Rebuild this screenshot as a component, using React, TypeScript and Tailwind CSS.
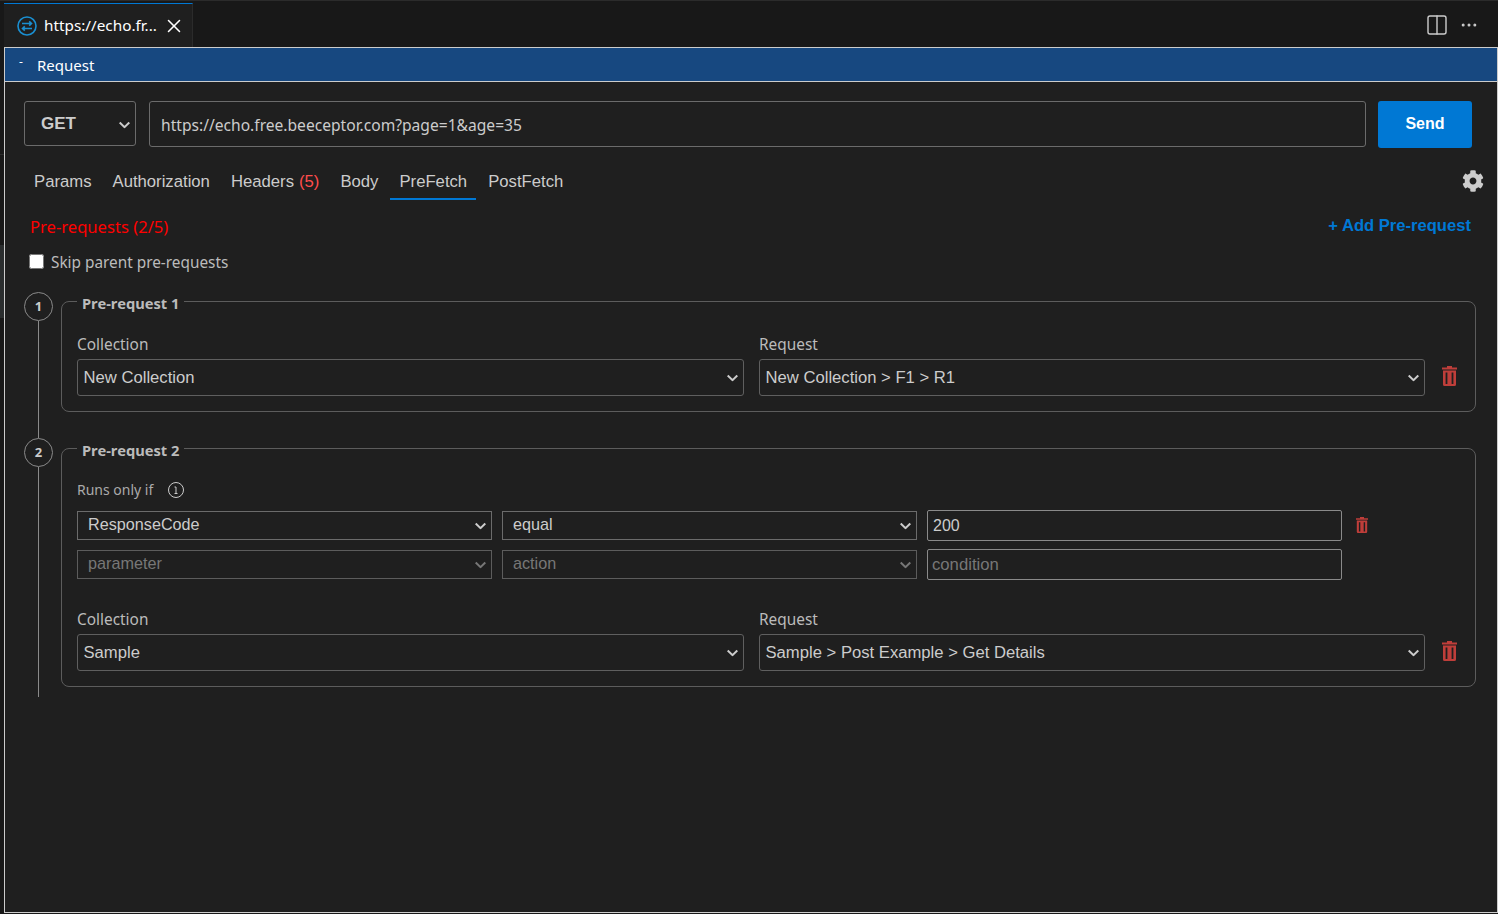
import { ReactNode } from 'react';
import { X, Columns2, Ellipsis } from 'lucide-react';
import { FaCog } from 'react-icons/fa';

const ui = 'font-["Noto_Sans",sans-serif]';
const arial = 'font-["Liberation_Sans",Arial,sans-serif]';

function TrashIcon({ className }: { className: string }) {
  return (
    <svg viewBox="0 0 15 20" fill="#bf3e3a" fillRule="evenodd" className={`shrink-0 ${className}`}>
      <path d="M5 0h5v1.5h5v2H0v-2h5z" />
      <path d="M1 4.5h13V18.5a1.5 1.5 0 0 1-1.5 1.5h-10A1.5 1.5 0 0 1 1 18.5zM3.6 6.5v11.5h1.8V6.5zM9.6 6.5v11.5h1.8V6.5z" />
    </svg>
  );
}

function FieldSelect({ value, className, selectClassName }: { value: string; className: string; selectClassName: string }) {
  return (
    <div className={`relative ${className}`}>
      <select
        defaultValue={value}
        className={`block w-full h-full appearance-none bg-[#1f1f1f] border ${selectClassName}`}
      >
        <option>{value}</option>
      </select>
      <svg
        width="11"
        height="7"
        viewBox="0 0 11 7"
        fill="none"
        stroke="currentColor"
        strokeWidth="2"
        className={`absolute right-[6px] top-1/2 -translate-y-1/2 mt-[1px] pointer-events-none ${value === 'parameter' || value === 'action' ? 'text-[#777777]' : 'text-[#cccccc]'}`}
      >
        <path d="M0.7 1l4.8 4.6L10.3 1" />
      </svg>
    </div>
  );
}

function CollectionRow({ collection, request }: { collection: string; request: string }) {
  const big = `rounded-[3px] border-[#5f5f5f] pl-[5.5px] pt-[2px] text-[16.65px] text-[#cccccc] ${arial}`;
  return (
    <div className="flex items-end">
      <label className="block w-[667px] mr-[15px]">
        <span className={`block text-[15.4px] leading-[20px] mb-[4px] text-[#bbbbbb] ${ui}`}>Collection</span>
        <FieldSelect value={collection} className="h-[37px]" selectClassName={big} />
      </label>
      <label className="block w-[666px]">
        <span className={`block text-[15.4px] leading-[20px] mb-[4px] text-[#bbbbbb] ${ui}`}>Request</span>
        <FieldSelect value={request} className="h-[37px]" selectClassName={big} />
      </label>
      <TrashIcon className="ml-[17px] mb-[10px] w-[15px] h-[20px]" />
    </div>
  );
}

function Step({ n, title, className, children }: { n: number; title: string; className: string; children: ReactNode }) {
  return (
    <div className="flex">
      <div className="flex flex-col items-center w-[29px] mr-[8px] shrink-0">
        <div className={`w-[29px] h-[29px] pt-[1px] rounded-full border border-[#8a8a8a] flex items-center justify-center text-[13px] font-bold text-[#cccccc] ${ui}`}>
          {n}
        </div>
        <div className="flex-1 w-px bg-[#8a8a8a]" />
      </div>
      <fieldset className={`flex-1 self-start border border-[#5c5c5c] rounded-[8px] px-[15px] pb-[15px] ${className}`}>
        <legend className={`px-[5px] pt-[4px] text-[14.7px] leading-[15px] font-bold text-[#bbbbbb] ${ui}`}>{title}</legend>
        {children}
      </fieldset>
    </div>
  );
}

export default function App() {
  const cond = `border-[#6b6b6b] pl-[10px] pb-[2px] text-[16.2px] text-[#cccccc] ${arial}`;
  const condEmpty = `border-[#5c5c5c] pl-[10px] pb-[2px] text-[16.2px] text-[#777777] ${arial}`;
  const tab = 'h-[36px] px-[9px] pb-[1px] flex items-center';

  return (
    <div className="w-[1498px] h-[914px] overflow-hidden bg-[#181818] flex flex-col">
      {/* Tab strip */}
      <div className="h-[47px] shrink-0 flex items-stretch pl-[4px] pt-[2px] border-t border-[#2b2b2b]">
        <div className="w-[189px] bg-[#1f1f1f] border-t border-[#0078d4] border-r border-r-[#2b2b2b] flex items-center pl-[13px]">
          <svg width="20" height="20" viewBox="0 0 20 20" fill="none" stroke="#1a8fd1" strokeWidth="1.6" className="shrink-0">
            <circle cx="10" cy="10" r="9" />
            <path d="M5 7.5h9.5M12.2 5.3l2.3 2.2-2.3 2.2" />
            <path d="M15 12.5H5.5M7.8 10.3l-2.3 2.2 2.3 2.2" />
          </svg>
          <span className={`ml-[7px] text-[15.3px] text-white ${ui}`}>https://echo.fr...</span>
          <X className="ml-[6px] text-white" size={22} strokeWidth={1.7} />
        </div>
        <div className="flex-1 flex items-center justify-end gap-[10px] pr-[19px]">
          <Columns2 className="text-[#cccccc]" size={24} strokeWidth={1.4} />
          <Ellipsis className="text-[#cccccc]" size={20} strokeWidth={1.6} />
        </div>
      </div>

      <div className="flex-1 flex mb-[1px]">
        {/* Left rail */}
        <div className="w-[4px] shrink-0">
          <div className="h-[108px] border-b border-[#2b2b2b]" />
          <div className="h-[90px]" />
          <div className="h-[73px] bg-[#2a2d2e]" />
        </div>

        {/* Request panel */}
        <div className="flex-1 bg-[#1f1f1f] border border-[#cccccc] border-t-0">
          <div className={`h-[35px] pt-[1px] bg-[#174880] border-y border-[#cccccc] flex items-center pl-[14px] text-[15px] text-white ${ui}`}>
            <span className="w-[18px] -mt-[6px] text-[12px]">-</span>
            Request
          </div>

          <div className="pl-[19px] pr-[25px] pt-[19px] flex items-start">
            <FieldSelect
              value="GET"
              className="w-[112px] h-[45px]"
              selectClassName={`rounded-[3px] border-[#6b6b6b] pl-[16px] text-[17px] font-bold text-[#cccccc] ${arial}`}
            />
            <input
              readOnly
              value="https://echo.free.beeceptor.com?page=1&age=35"
              className={`ml-[13px] flex-1 h-[46px] pt-[1px] rounded-[3px] border border-[#6b6b6b] bg-[#1f1f1f] px-[11px] text-[15.6px] text-[#cccccc] ${ui}`}
            />
            <button className={`ml-[12px] w-[94px] h-[47px] pb-[2px] rounded-[3px] bg-[#0078d4] text-[16px] font-bold text-white ${arial}`}>
              Send
            </button>
          </div>

          <div className={`mt-[16px] pl-[20px] pr-[13px] flex items-start gap-[3px] text-[16.7px] text-[#cccccc] ${arial}`}>
            <span className={tab}>Params</span>
            <span className={tab}>Authorization</span>
            <span className={tab}>
              Headers<span className="ml-[5px] text-[#ff4d4d]">(5)</span>
            </span>
            <span className={tab}>Body</span>
            <span className="h-[36px] px-[9px] pt-[2px] flex items-center border-b-2 border-[#0078d4]">PreFetch</span>
            <span className={tab}>PostFetch</span>
            <FaCog className="ml-auto mt-[6px] text-[#cccccc]" size={22} />
          </div>

          <div className="mt-[15px] pl-[25px] pr-[26px] flex items-center justify-between">
            <span className={`text-[16.6px] text-[#ff0000] ${ui}`}>Pre-requests (2/5)</span>
            <span className={`-mt-[2px] text-[16.6px] font-bold text-[#0078d4] ${arial}`}>+ Add Pre-request</span>
          </div>

          <label className={`mt-[12px] pl-[24px] flex items-center gap-[7px] text-[15.35px] leading-[20px] text-[#bbbbbb] ${ui}`}>
            <input type="checkbox" className="w-[15px] h-[15px]" />
            Skip parent pre-requests
          </label>

          <div className="mt-[20px] pl-[19px] pr-[21px]">
            <Step n={1} title="Pre-request 1" className="mb-[26px]">
              <div className="pt-[24px]">
                <CollectionRow collection="New Collection" request="New Collection > F1 > R1" />
              </div>
            </Step>
            <Step n={2} title="Pre-request 2" className="mt-[1px] mb-[10px]">
              <div className={`pt-[22px] flex items-center text-[14px] leading-[20px] text-[#aaaaaa] ${ui}`}>
                Runs only if
                <svg width="16" height="16" viewBox="0 0 16 16" fill="none" stroke="#cccccc" className="ml-[15px]">
                  <circle cx="8" cy="8" r="7.5" />
                  <path d="M6.5 5h1.5v6.5M6.5 11.5h3" />
                </svg>
              </div>
              <div className="mt-[10px] flex items-center gap-[10px]">
                <FieldSelect value="ResponseCode" className="w-[415px] h-[29px]" selectClassName={cond} />
                <FieldSelect value="equal" className="w-[415px] h-[29px]" selectClassName={cond} />
                <input readOnly value="200" className={`w-[415px] h-[31px] pt-[1px] rounded-[2px] border border-[#8a8a8a] bg-[#1f1f1f] px-[5px] text-[16px] text-[#cccccc] ${arial}`} />
                <TrashIcon className="ml-[4px] w-[12px] h-[16px]" />
              </div>
              <div className="mt-[8px] flex items-center gap-[10px]">
                <FieldSelect value="parameter" className="w-[415px] h-[29px]" selectClassName={condEmpty} />
                <FieldSelect value="action" className="w-[415px] h-[29px]" selectClassName={condEmpty} />
                <input readOnly placeholder="condition" className={`w-[415px] h-[31px] pt-[1px] rounded-[2px] border border-[#8a8a8a] bg-[#1f1f1f] px-[4px] text-[16.7px] placeholder:text-[#777777] ${arial}`} />
              </div>
              <div className="mt-[30px]">
                <CollectionRow collection="Sample" request="Sample > Post Example > Get Details" />
              </div>
            </Step>
          </div>
        </div>
      </div>
    </div>
  );
}
